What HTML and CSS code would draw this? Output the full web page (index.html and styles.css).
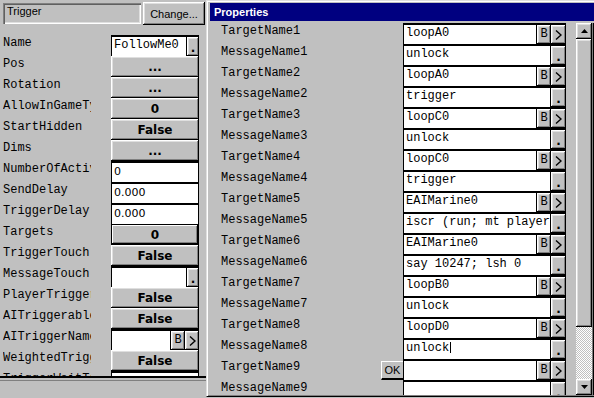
FILE: index.html
```html
<!DOCTYPE html>
<html lang="en">
<head>
    <meta charset="UTF-8">
    <meta name="viewport" content="width=device-width, initial-scale=1.0">
    <title>Trigger Properties</title>
    <link rel="stylesheet" href="styles.css">
</head>
<body>
<div class="desk">

    <div class="trigger-panel">
        <div class="panel-head">
            <div class="class-box">Trigger</div>
            <button class="change raised">Change...</button>
        </div>

        <div class="prop-list">
            <div class="prop-row"><span class="prop-name">Name</span><div class="prop-value edit"><span class="field">FollowMe0</span><span class="mini dot raised">.</span></div></div>
            <div class="prop-row"><span class="prop-name">Pos</span><div class="prop-value"><span class="push raised">...</span></div></div>
            <div class="prop-row"><span class="prop-name">Rotation</span><div class="prop-value"><span class="push raised">...</span></div></div>
            <div class="prop-row"><span class="prop-name">AllowInGameType</span><div class="prop-value"><span class="push raised">0</span></div></div>
            <div class="prop-row"><span class="prop-name">StartHidden</span><div class="prop-value"><span class="push raised">False</span></div></div>
            <div class="prop-row"><span class="prop-name">Dims</span><div class="prop-value"><span class="push raised">...</span></div></div>
            <div class="prop-row"><span class="prop-name">NumberOfActivations</span><div class="prop-value edit"><span class="field sans">0</span></div></div>
            <div class="prop-row"><span class="prop-name">SendDelay</span><div class="prop-value edit"><span class="field sans">0.000</span></div></div>
            <div class="prop-row"><span class="prop-name">TriggerDelay</span><div class="prop-value edit"><span class="field sans">0.000</span></div></div>
            <div class="prop-row"><span class="prop-name">Targets</span><div class="prop-value"><span class="push raised default">0</span></div></div>
            <div class="prop-row"><span class="prop-name">TriggerTouch</span><div class="prop-value"><span class="push raised">False</span></div></div>
            <div class="prop-row"><span class="prop-name">MessageTouch</span><div class="prop-value edit"><span class="field"></span><span class="mini dot raised">.</span></div></div>
            <div class="prop-row"><span class="prop-name">PlayerTriggerable</span><div class="prop-value"><span class="push raised">False</span></div></div>
            <div class="prop-row"><span class="prop-name">AITriggerable</span><div class="prop-value"><span class="push raised">False</span></div></div>
            <div class="prop-row"><span class="prop-name">AITriggerName</span><div class="prop-value edit"><span class="field"></span><span class="mini raised">B</span><span class="mini raised"><svg width="7" height="10" viewBox="0 0 7 10"><path d="M1 0.5 L6 5 L1 9.5" fill="none" stroke="#000" stroke-width="1.4"/></svg></span></div></div>
            <div class="prop-row"><span class="prop-name">WeightedTrigger</span><div class="prop-value"><span class="push raised">False</span></div></div>
            <div class="prop-row"><span class="prop-name">TriggerWaitTime</span><div class="prop-value edit"><span class="field"></span></div></div>
        </div>

        <div class="panel-foot"></div>
    </div>

    <div class="props-window">
        <div class="titlebar">Properties</div>
        <div class="window-body">
            <div class="grid">
                <div class="grid-row"><span class="grid-label">TargetName1</span><div class="grid-value edit"><span class="field">loopA0</span><span class="mini raised">B</span><span class="mini raised"><svg width="7" height="10" viewBox="0 0 7 10"><path d="M1 0.5 L6 5 L1 9.5" fill="none" stroke="#000" stroke-width="1.4"/></svg></span></div></div>
                <div class="grid-row"><span class="grid-label">MessageName1</span><div class="grid-value edit"><span class="field">unlock</span><span class="mini dot raised">.</span></div></div>
                <div class="grid-row"><span class="grid-label">TargetName2</span><div class="grid-value edit"><span class="field">loopA0</span><span class="mini raised">B</span><span class="mini raised"><svg width="7" height="10" viewBox="0 0 7 10"><path d="M1 0.5 L6 5 L1 9.5" fill="none" stroke="#000" stroke-width="1.4"/></svg></span></div></div>
                <div class="grid-row"><span class="grid-label">MessageName2</span><div class="grid-value edit"><span class="field">trigger</span><span class="mini dot raised">.</span></div></div>
                <div class="grid-row"><span class="grid-label">TargetName3</span><div class="grid-value edit"><span class="field">loopC0</span><span class="mini raised">B</span><span class="mini raised"><svg width="7" height="10" viewBox="0 0 7 10"><path d="M1 0.5 L6 5 L1 9.5" fill="none" stroke="#000" stroke-width="1.4"/></svg></span></div></div>
                <div class="grid-row"><span class="grid-label">MessageName3</span><div class="grid-value edit"><span class="field">unlock</span><span class="mini dot raised">.</span></div></div>
                <div class="grid-row"><span class="grid-label">TargetName4</span><div class="grid-value edit"><span class="field">loopC0</span><span class="mini raised">B</span><span class="mini raised"><svg width="7" height="10" viewBox="0 0 7 10"><path d="M1 0.5 L6 5 L1 9.5" fill="none" stroke="#000" stroke-width="1.4"/></svg></span></div></div>
                <div class="grid-row"><span class="grid-label">MessageName4</span><div class="grid-value edit"><span class="field">trigger</span><span class="mini dot raised">.</span></div></div>
                <div class="grid-row"><span class="grid-label">TargetName5</span><div class="grid-value edit"><span class="field">EAIMarine0</span><span class="mini raised">B</span><span class="mini raised"><svg width="7" height="10" viewBox="0 0 7 10"><path d="M1 0.5 L6 5 L1 9.5" fill="none" stroke="#000" stroke-width="1.4"/></svg></span></div></div>
                <div class="grid-row"><span class="grid-label">MessageName5</span><div class="grid-value edit"><span class="field">iscr (run; mt player</span><span class="mini dot raised">.</span></div></div>
                <div class="grid-row"><span class="grid-label">TargetName6</span><div class="grid-value edit"><span class="field">EAIMarine0</span><span class="mini raised">B</span><span class="mini raised"><svg width="7" height="10" viewBox="0 0 7 10"><path d="M1 0.5 L6 5 L1 9.5" fill="none" stroke="#000" stroke-width="1.4"/></svg></span></div></div>
                <div class="grid-row"><span class="grid-label">MessageName6</span><div class="grid-value edit"><span class="field">say 10247; lsh 0</span><span class="mini dot raised">.</span></div></div>
                <div class="grid-row"><span class="grid-label">TargetName7</span><div class="grid-value edit"><span class="field">loopB0</span><span class="mini raised">B</span><span class="mini raised"><svg width="7" height="10" viewBox="0 0 7 10"><path d="M1 0.5 L6 5 L1 9.5" fill="none" stroke="#000" stroke-width="1.4"/></svg></span></div></div>
                <div class="grid-row"><span class="grid-label">MessageName7</span><div class="grid-value edit"><span class="field">unlock</span><span class="mini dot raised">.</span></div></div>
                <div class="grid-row"><span class="grid-label">TargetName8</span><div class="grid-value edit"><span class="field">loopD0</span><span class="mini raised">B</span><span class="mini raised"><svg width="7" height="10" viewBox="0 0 7 10"><path d="M1 0.5 L6 5 L1 9.5" fill="none" stroke="#000" stroke-width="1.4"/></svg></span></div></div>
                <div class="grid-row"><span class="grid-label">MessageName8</span><div class="grid-value edit"><span class="field">unlock<span class="caret"></span></span><span class="mini dot raised">.</span></div></div>
                <div class="grid-row"><span class="grid-label">TargetName9</span><div class="grid-value edit"><span class="field"></span><span class="mini raised">B</span><span class="mini raised"><svg width="7" height="10" viewBox="0 0 7 10"><path d="M1 0.5 L6 5 L1 9.5" fill="none" stroke="#000" stroke-width="1.4"/></svg></span></div></div>
                <div class="grid-row"><span class="grid-label">MessageName9</span><div class="grid-value edit"><span class="field"></span><span class="mini dot raised">.</span></div></div>
            </div>
            <div class="scrollbar">
                <span class="sb-arrow raised"><svg width="7" height="4" viewBox="0 0 7 4"><path d="M3.5 0 L7 4 L0 4 Z" fill="#000"/></svg></span>
                <span class="sb-thumb raised"></span>
                <span class="sb-track"></span>
                <span class="sb-arrow raised"><svg width="7" height="4" viewBox="0 0 7 4"><path d="M0 0 L7 0 L3.5 4 Z" fill="#000"/></svg></span>
            </div>
            <div class="edge"></div>
        </div>
        <button class="ok-btn">OK</button>
    </div>

</div>
</body>
</html>
```

FILE: styles.css
```css
* {
    box-sizing: border-box;
}

body {
    margin: 0;
    background-color: #c0c0c0;
    font-family: "Liberation Sans", Arial, sans-serif;
    font-size: 11px;
    color: #000;
    overflow: hidden;
}

button {
    font: inherit;
    color: #000;
    border: 0;
    padding: 0;
    background-color: #c0c0c0;
}

.desk {
    position: relative;
    width: 594px;
    height: 398px;
    overflow: hidden;
}

/* win95 style bevels */
.raised {
    background-color: #c0c0c0;
    box-shadow: inset -1px -1px #000, inset 1px 1px #fff, inset -2px -2px #808080, inset 2px 2px #dfdfdf;
}

/* left panel (the trigger actor) */
.trigger-panel {
    width: 206px;
    height: 398px;
    display: flex;
    flex-direction: column;
    padding-top: 2px;
}

.panel-head {
    display: flex;
    align-items: flex-start;
    height: 23px;
    margin-bottom: 10px;
}

.class-box {
    margin: 1px 0 0 3px;
    width: 138px;
    height: 21px;
    padding: 2px 0 0 4px;
    line-height: 13px;
    box-shadow: inset 1px 1px #808080, inset 2px 2px #606060, inset -1px -1px #fff, inset -2px -2px #dfdfdf;
}

.change {
    margin-left: 2px;
    width: 62px;
    height: 23px;
}

.prop-list {
    height: 341px;
    overflow: hidden;
}

.prop-row {
    display: flex;
    height: 21px;
}

.prop-name {
    width: 88px;
    margin-left: 3px;
    margin-right: 20px;
    overflow: hidden;
    white-space: nowrap;
    font-family: "Liberation Mono", "Courier New", monospace;
    font-size: 12px;
    line-height: 17px;
}

.prop-value {
    width: 88px;
    display: flex;
}

.push {
    flex: 1;
    display: flex;
    justify-content: center;
    align-items: center;
    font-family: "DejaVu Sans", sans-serif;
    font-weight: bold;
    font-size: 12px;
}

.push.default {
    box-shadow: inset 0 0 0 1px #000, inset -2px -2px #000, inset 2px 2px #fff, inset -3px -3px #808080;
}

.edit {
    border-top: 2px solid #000;
    border-left: 1px solid #000;
}

.field {
    flex: 1;
    min-width: 0;
    background-color: #fff;
    border-right: 1px solid #000;
    padding-left: 2px;
    overflow: hidden;
    white-space: pre;
    font-family: "Liberation Mono", "Courier New", monospace;
    font-size: 12px;
    line-height: 17px;
}

.field.sans {
    font-family: "DejaVu Sans", sans-serif;
    font-size: 11px;
}

.caret {
    display: inline-block;
    width: 1px;
    height: 11px;
    margin-left: 1px;
    background-color: #000;
    vertical-align: -2px;
}

.mini {
    width: 14px;
    display: flex;
    justify-content: center;
    font-family: "Liberation Mono", "Courier New", monospace;
    font-size: 12px;
    line-height: 17px;
    align-items: center;
}

.mini.dot {
    align-items: flex-start;
    font-family: "DejaVu Sans", sans-serif;
    font-weight: bold;
    padding-top: 3px;
}

.prop-value .mini.dot {
    width: 12px;
}

.panel-foot {
    flex: 1;
    border-top: 2px solid #000;
    box-shadow: inset 0 2px #c0c0c0, inset 0 3px #808080;
}

/* properties window */
.props-window {
    position: absolute;
    left: 206px;
    top: 0;
    width: 394px;
    height: 397px;
    background-color: #c0c0c0;
    border: 1px solid;
    border-color: #dfdfdf #000 #000 #dfdfdf;
    box-shadow: inset 1px 1px #fff, inset -1px -1px #808080;
    padding: 2px 3px 0 3px;
}

.titlebar {
    height: 18px;
    padding-left: 4px;
    background-color: #000080;
    color: #fff;
    font-weight: bold;
    line-height: 18px;
}

.window-body {
    display: flex;
    margin-top: 2px;
    height: 372px;
}

.grid {
    width: 356px;
    margin-right: 10px;
    overflow: hidden;
}

.grid-row {
    display: flex;
    height: 21px;
}

.grid-label {
    width: 193px;
    padding-left: 11px;
    white-space: nowrap;
    font-family: "Liberation Mono", "Courier New", monospace;
    font-size: 12px;
    line-height: 17px;
}

.grid-value {
    width: 163px;
    display: flex;
}

.grid-value .mini:last-child {
    width: 15px;
}

.scrollbar {
    width: 16px;
    display: flex;
    flex-direction: column;
}

.sb-arrow {
    height: 16px;
    display: flex;
    justify-content: center;
    align-items: center;
}

.sb-thumb {
    height: 288px;
}

.sb-track {
    flex: 1;
    background: repeating-conic-gradient(#c0c0c0 0 25%, #fff 0 50%) 0 0 / 2px 2px;
}

.edge {
    width: 2px;
    border-left: 1px solid #808080;
    background-color: #000;
}

.ok-btn {
    position: absolute;
    left: 174px;
    top: 360px;
    width: 22px;
    height: 19px;
    border-top: 1px solid #fff;
    border-left: 1px solid #fff;
    border-bottom: 2px solid #000;
    line-height: 16px;
    text-align: center;
}
```
